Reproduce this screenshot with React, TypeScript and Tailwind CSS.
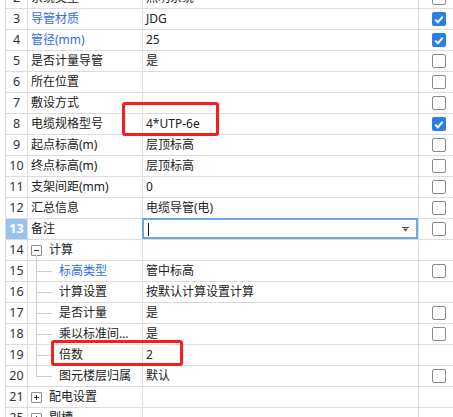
import React from 'react'

type Kind = 'item' | 'child' | 'group'

interface Row {
  n: number
  name: string
  value?: string
  kind: Kind
  blue?: boolean
  check?: boolean
  last?: boolean
  open?: boolean
  editing?: boolean
}

const rows: Row[] = [
  { n: 2, name: '系统类型', value: '照明系统', kind: 'item', check: false },
  { n: 3, name: '导管材质', value: 'JDG', kind: 'item', blue: true, check: true },
  { n: 4, name: '管径(mm)', value: '25', kind: 'item', blue: true, check: true },
  { n: 5, name: '是否计量导管', value: '是', kind: 'item', check: false },
  { n: 6, name: '所在位置', kind: 'item', check: false },
  { n: 7, name: '敷设方式', kind: 'item', check: false },
  { n: 8, name: '电缆规格型号', value: '4*UTP-6e', kind: 'item', check: true },
  { n: 9, name: '起点标高(m)', value: '层顶标高', kind: 'item', check: false },
  { n: 10, name: '终点标高(m)', value: '层顶标高', kind: 'item', check: false },
  { n: 11, name: '支架间距(mm)', value: '0', kind: 'item', check: false },
  { n: 12, name: '汇总信息', value: '电缆导管(电)', kind: 'item', check: false },
  { n: 13, name: '备注', kind: 'item', check: false, editing: true },
  { n: 14, name: '计算', kind: 'group', open: true },
  { n: 15, name: '标高类型', value: '管中标高', kind: 'child', blue: true, check: false },
  { n: 16, name: '计算设置', value: '按默认计算设置计算', kind: 'child' },
  { n: 17, name: '是否计量', value: '是', kind: 'child', check: false },
  { n: 18, name: '乘以标准间距倍数', value: '是', kind: 'child', check: false },
  { n: 19, name: '倍数', value: '2', kind: 'child' },
  { n: 20, name: '图元楼层归属', value: '默认', kind: 'child', check: false, last: true },
  { n: 21, name: '配电设置', kind: 'group', open: false },
  { n: 25, name: '剔槽', kind: 'group', open: false },
]

function Checkbox({ checked }: { checked: boolean }) {
  if (checked) {
    return (
      <span className="w-[14px] h-[14px] rounded-[2px] bg-[#2b7de9] flex items-center justify-center">
        <svg width="10" height="9" viewBox="0 0 10 9">
          <path d="M1.2 4.6 L3.9 7.2 L8.8 1.6" fill="none" stroke="#fff" strokeWidth="2" />
        </svg>
      </span>
    )
  }
  return <span className="w-[14px] h-[14px] rounded-[2px] border border-[#8a8a8a] bg-white" />
}

function ToggleBox({ open }: { open: boolean }) {
  return (
    <span className="relative w-[11px] h-[11px] border border-[#8c8c8c] rounded-[1px] bg-white shrink-0">
      <span className="absolute left-[2px] top-[4px] w-[5px] h-px bg-[#333]" />
      {!open && <span className="absolute left-[4px] top-[2px] w-px h-[5px] bg-[#333]" />}
    </span>
  )
}

function NameCell({ row }: { row: Row }) {
  const color = row.blue ? 'text-[#2f6bea]' : 'text-[#222]'
  if (row.kind === 'group') {
    return (
      <div className="relative w-[115px] shrink-0 border-r border-b border-[#dcdcdc] flex items-center pl-[3px] gap-[7px]">
        <ToggleBox open={!!row.open} />
        <span className="text-[#222]">{row.name}</span>
        {row.open && <span className="absolute left-[8px] top-[15px] bottom-[-1px] w-px bg-[#cfcfcf]" />}
      </div>
    )
  }
  if (row.kind === 'child') {
    return (
      <div className="relative w-[115px] shrink-0 border-r border-b border-[#dcdcdc] flex items-center pl-[31px] pr-[4px] min-w-0">
        <span className={`absolute left-[8px] top-0 w-px bg-[#cfcfcf] ${row.last ? 'h-[10px]' : 'bottom-[-1px]'}`} />
        <span className="absolute left-[8px] top-[10px] w-[16px] h-px bg-[#cfcfcf]" />
        <span className={`${color} truncate min-w-0`}>{row.name}</span>
      </div>
    )
  }
  return (
    <div className="w-[115px] shrink-0 border-r border-b border-[#dcdcdc] flex items-center pl-[3px]">
      <span className={color}>{row.name}</span>
    </div>
  )
}

export default function App() {
  return (
    <div className="relative w-[453px] h-[417px] overflow-hidden bg-white text-[12px] font-['Noto_Sans','Noto_Sans_CJK_SC',sans-serif]">
      <div className="ml-[5px] mt-[-12px] border-l border-[#dcdcdc]">
        {rows.map((row) => (
          <div key={row.n} className="flex h-[21px] leading-[20px]">
            <div
              className={`w-[22px] shrink-0 border-r border-b border-[#dcdcdc] text-center text-[12.5px] ${
                row.editing ? 'bg-[#99c3ef] text-white font-bold' : 'text-[#333]'
              }`}
            >
              {row.n}
            </div>
            <NameCell row={row} />
            <div className="relative w-[276px] shrink-0 border-r border-b border-[#dcdcdc] flex items-center pl-[3px] text-[#222]">
              {row.editing ? (
                <>
                  <span className="ml-[2px] w-px h-[13px] bg-[#111]" />
                  <svg className="absolute left-[259px] top-[8px]" width="7" height="5" viewBox="0 0 7 5">
                    <path d="M0 0 H7 V1 H0 Z M1 1.5 H6 L3.5 4.5 Z" fill="#555" />
                  </svg>
                  <span className="absolute -top-px -left-px right-0 bottom-0 border-2 border-[#6aa8e8]" />
                </>
              ) : (
                row.value
              )}
            </div>
            <div className="flex-1 border-b border-[#dcdcdc] flex items-center pl-[13px]">
              {row.check !== undefined && <Checkbox checked={row.check} />}
            </div>
          </div>
        ))}
      </div>
      <div className="absolute left-[122px] top-[102px] w-[97px] h-[34px] border-[3px] border-[#f41e1e] rounded-[3px]" />
      <div className="absolute left-[51px] top-[340px] w-[132px] h-[26px] border-[3px] border-[#f41e1e] rounded-[3px]" />
    </div>
  )
}
